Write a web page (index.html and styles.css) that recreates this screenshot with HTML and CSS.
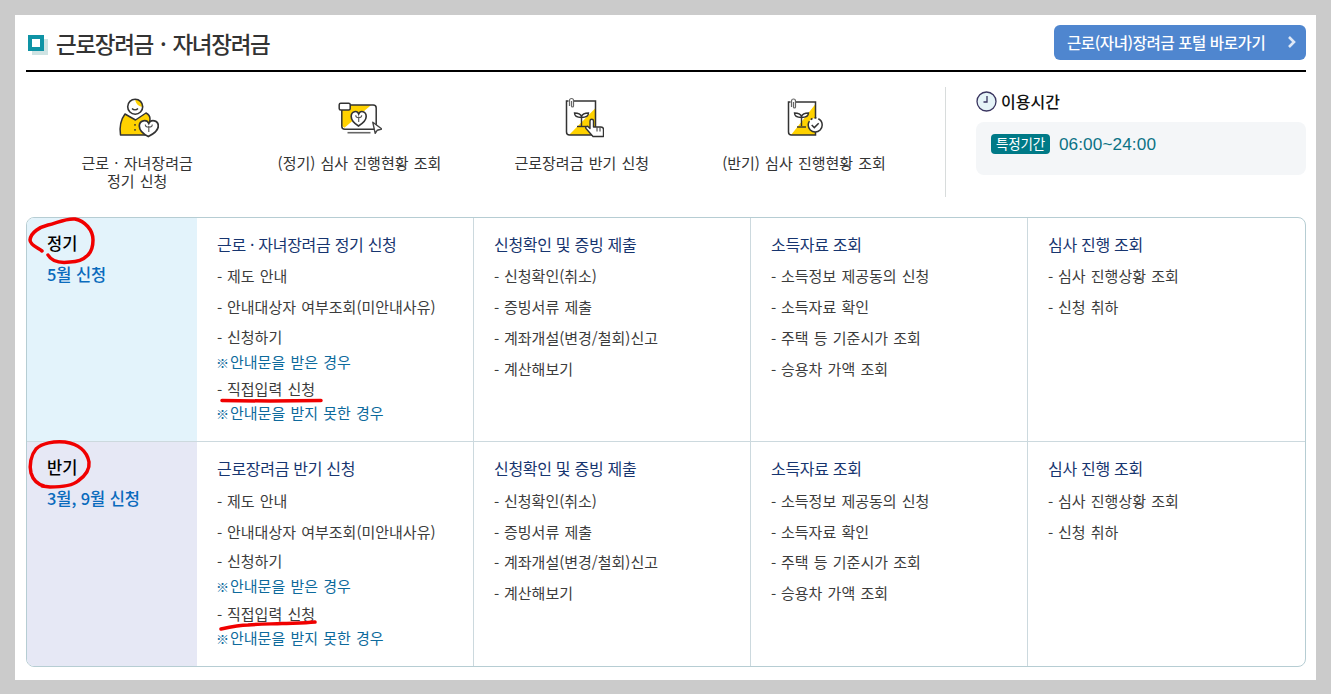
FILE: index.html
```html
<!DOCTYPE html>
<html lang="ko">
<head>
<meta charset="utf-8">
<title>근로장려금 · 자녀장려금</title>
<link rel="stylesheet" href="styles.css">
</head>
<body>
<main class="panel">
  <header class="head">
    <h1 class="title"><span class="title-mark"></span>근로장려금 · 자녀장려금</h1>
    <a class="portal" href="#">근로(자녀)장려금 포털 바로가기<svg class="portal-arrow" width="10" height="14" viewBox="0 0 10 14"><path d="M2 2l5 5-5 5" fill="none" stroke="#dfe8f6" stroke-width="2.600"/></svg></a>
  </header>

  <section class="quick">
    <ul class="quick-list">
      <li class="quick-item">
        <svg class="qi" width="44" height="44" viewBox="0 0 44 44">
          <path d="M5.500 38c-1-7 0-15 4.500-21l10.500 6 10.500-7c2 1 4 3 4 6l-2 16z" fill="#ffd200" stroke="#333" stroke-width="1.500" stroke-linejoin="round"/>
          <circle cx="20.200" cy="9.700" r="7.500" fill="#fff"/>
          <path d="M20 2.200a7.500 7.500 0 0 1 7.500 7.500c-3 0-6.500-2-7.500-7.500z" fill="#ffd200"/>
          <circle cx="20.200" cy="9.700" r="7.500" fill="none" stroke="#333" stroke-width="1.600"/>
          <path d="M17 11.500c1.500 1.800 4.500 1.800 6 0" fill="none" stroke="#333" stroke-width="1.200"/>
          <path d="M33.300 39.500c-5-2.500-9-6-9-10.500 0-6 7.500-7 9.500-2.500 2-4.500 9.500-3.500 9.500 2.500 0 4.500-5 8-10 10.500z" fill="#fff" stroke="#333" stroke-width="1.700"/>
          <path d="M33.800 35v-6m-3.500-1.500c0 2.200 1.200 2.700 3.500 2.700s3.500-.5 3.500-2.700" fill="none" stroke="#555" stroke-width="1.100"/>
          <path d="M20 27v1.800M20 32v1.800" stroke="#333" stroke-width="1.400"/>
        </svg>
        <span class="qlabel">근로 · 자녀장려금<br>정기 신청</span>
      </li>
      <li class="quick-item">
        <svg class="qi" width="46" height="44" viewBox="0 0 46 44">
          <rect x="5.800" y="8" width="34.400" height="24.300" rx="3" fill="#fff"/>
          <path d="M6 10l2-2h27.200L8.500 30.700 6 29z" fill="#ffd200"/>
          <rect x="5.800" y="8" width="34.400" height="24.300" rx="3" fill="none" stroke="#333" stroke-width="1.500"/>
          <rect x="3.200" y="6.300" width="11" height="6.700" rx="1.500" fill="#fff" stroke="#333" stroke-width="1.500"/>
          <path d="M22.500 29c-4-2.500-7.300-5.500-7.300-9.500 0-5.500 6-6.500 7.500-2.500 1.500-4 7.500-3 7.500 2.500 0 4-3.700 7-7.700 9.500z" fill="#fff" stroke="#333" stroke-width="1.600"/>
          <path d="M22.700 25v-5.500m-3-1.300c0 2 1 2.500 3 2.500s3-.5 3-2.500" fill="none" stroke="#555" stroke-width="1.100"/>
          <path d="M11.500 35.700h23" stroke="#666" stroke-width="1.600"/>
          <path d="M36.800 25.300l9 6.700-4.500 1.200-2.100 3.100z" fill="#fff" stroke="#444" stroke-width="1.400" stroke-linejoin="round"/>
        </svg>
        <span class="qlabel">(정기) 심사 진행현황 조회</span>
      </li>
      <li class="quick-item">
        <svg class="qi" width="44" height="44" viewBox="0 0 44 44">
          <path d="M6.500 4h29v34H9.500a3 3 0 0 1-3-3z" fill="#fff"/>
          <path d="M35.500 11v27H9z" fill="#ffd200"/>
          <path d="M13 4h22.500v34H9.500a3 3 0 0 1-3-3V4h2" fill="none" stroke="#333" stroke-width="1.500"/>
          <path d="M9.500 9V3.500a2 2 0 0 1 4 0V9a1 1 0 0 1-2 0V4" fill="none" stroke="#666" stroke-width="1.200"/>
          <path d="M21.500 29V20m-7-4c0 4 3 4.500 7 4.500s7-.5 7-4.500c-3 0-6 .5-7 3.500-1-3-4-3.500-7-3.500z" fill="none" stroke="#333" stroke-width="1.400"/>
          <path d="M17 29.500h9" stroke="#333" stroke-width="1.400"/>
          <path d="M33 39.500l-7-8c-1-1.500 1-3 2.500-1.500l1.500 1.500V24a1.700 1.700 0 0 1 3.500 0v6h7.500c1.500 0 2.500 1 2.500 2.500v7z" fill="#fff" stroke="#333" stroke-width="1.400" stroke-linejoin="round"/>
          <path d="M37 30.500v4M40 30.500v4" stroke="#333" stroke-width="1"/>
        </svg>
        <span class="qlabel">근로장려금 반기 신청</span>
      </li>
      <li class="quick-item">
        <svg class="qi" width="44" height="44" viewBox="0 0 44 44">
          <path d="M6.500 5h27v33H9.500a3 3 0 0 1-3-3z" fill="#fff"/>
          <path d="M33.500 7v31H9z" fill="#ffd200"/>
          <path d="M13 5h20.500v33H9.500a3 3 0 0 1-3-3V5h2" fill="none" stroke="#333" stroke-width="1.500"/>
          <path d="M9.500 10V4a2 2 0 0 1 4 0v6a1 1 0 0 1-2 0V5" fill="none" stroke="#666" stroke-width="1.200"/>
          <path d="M19.500 29v-9m-7-4c0 4 3 4.500 7 4.500s7-.5 7-4.500c-3 0-6 .5-7 3.500-1-3-4-3.500-7-3.500z" fill="none" stroke="#333" stroke-width="1.400"/>
          <path d="M15 30h9" stroke="#333" stroke-width="1.400"/>
          <circle cx="33.200" cy="28" r="7" fill="#fff" stroke="#333" stroke-width="1.500" stroke-dasharray="26 2 2 2 2 2"/>
          <path d="M29.700 28l2.600 2.600 4.400-4.400" fill="none" stroke="#333" stroke-width="1.500"/>
        </svg>
        <span class="qlabel">(반기) 심사 진행현황 조회</span>
      </li>
    </ul>
    <aside class="hours">
      <h2 class="hours-title">
        <svg width="21" height="21" viewBox="0 0 21 21"><circle cx="10.500" cy="10.500" r="9.500" fill="#e6f4f8" stroke="#3a3560" stroke-width="1.300"/><path d="M11 5v6H7.500" fill="none" stroke="#3a3560" stroke-width="1.300"/></svg>
        이용시간
      </h2>
      <div class="hours-box">
        <span class="badge">특정기간</span>
        <span class="time">06:00~24:00</span>
      </div>
    </aside>
  </section>

  <section class="board">
    <div class="row row-a">
      <div class="term term-a"><strong class="term-name">정기</strong><span class="term-when">5월 신청</span></div>
      <div class="cell cell-first">
        <h3 class="cell-title">근로 · 자녀장려금 정기 신청</h3>
        <ul class="links">
          <li class="link">제도 안내</li>
          <li class="link">안내대상자 여부조회(미안내사유)</li>
          <li class="link link-tight">신청하기</li>
          <li class="note"><span class="note-mark">※</span>안내문을 받은 경우</li>
          <li class="link link-direct">직접입력 신청</li>
          <li class="note"><span class="note-mark">※</span>안내문을 받지 못한 경우</li>
        </ul>
      </div>
      <div class="cell">
        <h3 class="cell-title">신청확인 및 증빙 제출</h3>
        <ul class="links">
          <li class="link">신청확인(취소)</li>
          <li class="link">증빙서류 제출</li>
          <li class="link">계좌개설(변경/철회)신고</li>
          <li class="link">계산해보기</li>
        </ul>
      </div>
      <div class="cell">
        <h3 class="cell-title">소득자료 조회</h3>
        <ul class="links">
          <li class="link">소득정보 제공동의 신청</li>
          <li class="link">소득자료 확인</li>
          <li class="link">주택 등 기준시가 조회</li>
          <li class="link">승용차 가액 조회</li>
        </ul>
      </div>
      <div class="cell cell-last">
        <h3 class="cell-title">심사 진행 조회</h3>
        <ul class="links">
          <li class="link">심사 진행상황 조회</li>
          <li class="link">신청 취하</li>
        </ul>
      </div>
    </div>
    <div class="row row-b">
      <div class="term term-b"><strong class="term-name">반기</strong><span class="term-when">3월, 9월 신청</span></div>
      <div class="cell cell-first">
        <h3 class="cell-title">근로장려금 반기 신청</h3>
        <ul class="links">
          <li class="link">제도 안내</li>
          <li class="link">안내대상자 여부조회(미안내사유)</li>
          <li class="link link-tight">신청하기</li>
          <li class="note"><span class="note-mark">※</span>안내문을 받은 경우</li>
          <li class="link link-direct">직접입력 신청</li>
          <li class="note"><span class="note-mark">※</span>안내문을 받지 못한 경우</li>
        </ul>
      </div>
      <div class="cell">
        <h3 class="cell-title">신청확인 및 증빙 제출</h3>
        <ul class="links">
          <li class="link">신청확인(취소)</li>
          <li class="link">증빙서류 제출</li>
          <li class="link">계좌개설(변경/철회)신고</li>
          <li class="link">계산해보기</li>
        </ul>
      </div>
      <div class="cell">
        <h3 class="cell-title">소득자료 조회</h3>
        <ul class="links">
          <li class="link">소득정보 제공동의 신청</li>
          <li class="link">소득자료 확인</li>
          <li class="link">주택 등 기준시가 조회</li>
          <li class="link">승용차 가액 조회</li>
        </ul>
      </div>
      <div class="cell cell-last">
        <h3 class="cell-title">심사 진행 조회</h3>
        <ul class="links">
          <li class="link">심사 진행상황 조회</li>
          <li class="link">신청 취하</li>
        </ul>
      </div>
    </div>
  </section>

  <svg class="marks" width="1331" height="694" viewBox="0 0 1331 694">
    <g fill="none" stroke="#f00000" stroke-width="3.500" stroke-linecap="round" stroke-linejoin="round">
      <path d="M42 251C38 248 30 245 30 240C31 232 40 227 48 225C57 223 66 218 75 219C85 221 93 230 93 240C93 248 91 252 88 255C83 260 76 262 70 262C62 263 52 262 48 255"/>
      <path d="M42 486L50 487C62 487 72 486 78 481C85 476 90 470 89 462C87 451 78 444 65 442C54 441 42 443 36 449C31 455 29 465 31 473C33 480 37 484 44 486"/>
      <path d="M222 400.500C250 401 290 401 321 400.500"/>
      <path d="M221 629C230 627 240 625 248 625C260 624 270 624 282 623.500C295 623 305 623 315 622"/>
    </g>
  </svg>
</main>
</body>
</html>
```

FILE: styles.css
```css
* { box-sizing: border-box; }
html, body { margin: 0; height: 100%; }
body {
  background: #cbcbcb;
  padding: 15px;
  height: 694px;
  overflow: hidden;
  font-family: "Noto Sans CJK KR", "Noto Sans", sans-serif;
  color: #333;
}
ul { list-style: none; margin: 0; padding: 0; }
h1, h2, h3 { margin: 0; font-weight: 400; }

.panel {
  background: #fff;
  width: 1301px;
  height: 665px;
  padding: 0 10px 0 11px;
}

.head {
  display: flex;
  justify-content: space-between;
  align-items: center;
  height: 57px;
  border-bottom: 2px solid #000;
}
.title {
  display: flex;
  align-items: center;
  font-size: 22.500px;
  font-weight: 500;
  letter-spacing: -1.300px;
  word-spacing: 2px;
  color: #333;
  line-height: 26px;
}
.title-mark {
  width: 16px;
  height: 16px;
  margin: 0 12px 0 2px;
  border: 4px solid #0e93a5;
  background: #fff;
  box-shadow: 4px 4px 0 #cfe3e3;
}
.portal {
  display: flex;
  align-items: center;
  justify-content: space-between;
  width: 252px;
  height: 35px;
  padding: 0 9px 0 13px;
  margin-top: -1px;
  border-radius: 6px;
  background: #4f86cf;
  color: #fff;
  font-size: 15.500px;
  font-weight: 500;
  letter-spacing: -.4px;
  text-decoration: none;
}

.quick {
  display: flex;
  height: 145px;
  padding-top: 15px;
}
.quick-list {
  display: flex;
  width: 920px;
  height: 110px;
  padding-top: 10px;
  border-right: 1px solid #d8dcdc;
}
.quick-item {
  flex: 0 0 222.300px;
  display: flex;
  flex-direction: column;
  align-items: center;
}
.qi { height: 44px; flex: none; }
.qlabel {
  margin-top: 13px;
  text-align: center;
  font-size: 15px;
  line-height: 18px;
  word-spacing: 1px;
  color: #333;
}
.hours { flex: 1; padding: 3px 0 0 30px; }
.hours-title {
  display: flex;
  align-items: center;
  gap: 4px;
  font-size: 16px;
  font-weight: 500;
  color: #111;
  line-height: 22px;
}
.hours-box {
  display: flex;
  align-items: flex-start;
  gap: 9px;
  height: 53px;
  margin-top: 10px;
  padding: 12px 15px;
  border-radius: 8px;
  background: #f4f6f8;
}
.badge {
  padding: 0 5px;
  height: 20px;
  line-height: 19px;
  border-radius: 4px;
  background: #007a87;
  color: #fff;
  font-size: 13.500px;
  letter-spacing: -.2px;
}
.time {
  font-family: "Liberation Sans", sans-serif;
  font-size: 17.200px;
  line-height: 20px;
  color: #0b7285;
  letter-spacing: .1px;
}

.board {
  height: 450px;
  border: 1px solid #b6cdd3;
  border-radius: 8px;
  overflow: hidden;
}
.row {
  display: grid;
  grid-template-columns: 170px 277px 277px 277px 1fr;
  height: 223px;
}
.row-b { height: 225px; border-top: 1px solid #ccd9de; }
.term { padding: 14px 20px; display: flex; flex-direction: column; }
.term-a { background: #e3f3fb; }
.term-b { background: #e6e8f5; }
.term-name {
  font-size: 16.500px;
  font-weight: 500;
  line-height: 22px;
  color: #000;
}
.term-when {
  margin-top: 10px;
  font-size: 16.500px;
  font-weight: 500;
  line-height: 20px;
  letter-spacing: -.1px;
  color: #0a6bbd;
}
.cell {
  padding: 15px 20px 0;
  border-right: 1px solid #ccd9de;
}
.cell-last { border-right: 0; }
.cell-title {
  font-size: 16px;
  font-weight: 400;
  line-height: 22px;
  letter-spacing: -.3px;
  color: #17356f;
}
.links { margin-top: 7px; }
.row-a .links { margin-top: 6.400px; }
.link {
  position: relative;
  padding-left: 10px;
  font-size: 15px;
  line-height: 30.700px;
  word-spacing: 1px;
  color: #3c3c3c;
}
.link::before {
  content: "-";
  position: absolute;
  left: 0;
  top: 1px;
}
.link-tight { line-height: 27px; }
.link-direct { line-height: 24px; margin-top: 2px; }
.note {
  margin: -1px 0 0 -1px;
  font-size: 15px;
  line-height: 25.500px;
  word-spacing: 1px;
  color: #0d6a9c;
}
.note-mark {
  font-size: 13px;
  margin-right: 1px;
}

.marks {
  position: absolute;
  left: 0;
  top: 0;
  pointer-events: none;
}
```
